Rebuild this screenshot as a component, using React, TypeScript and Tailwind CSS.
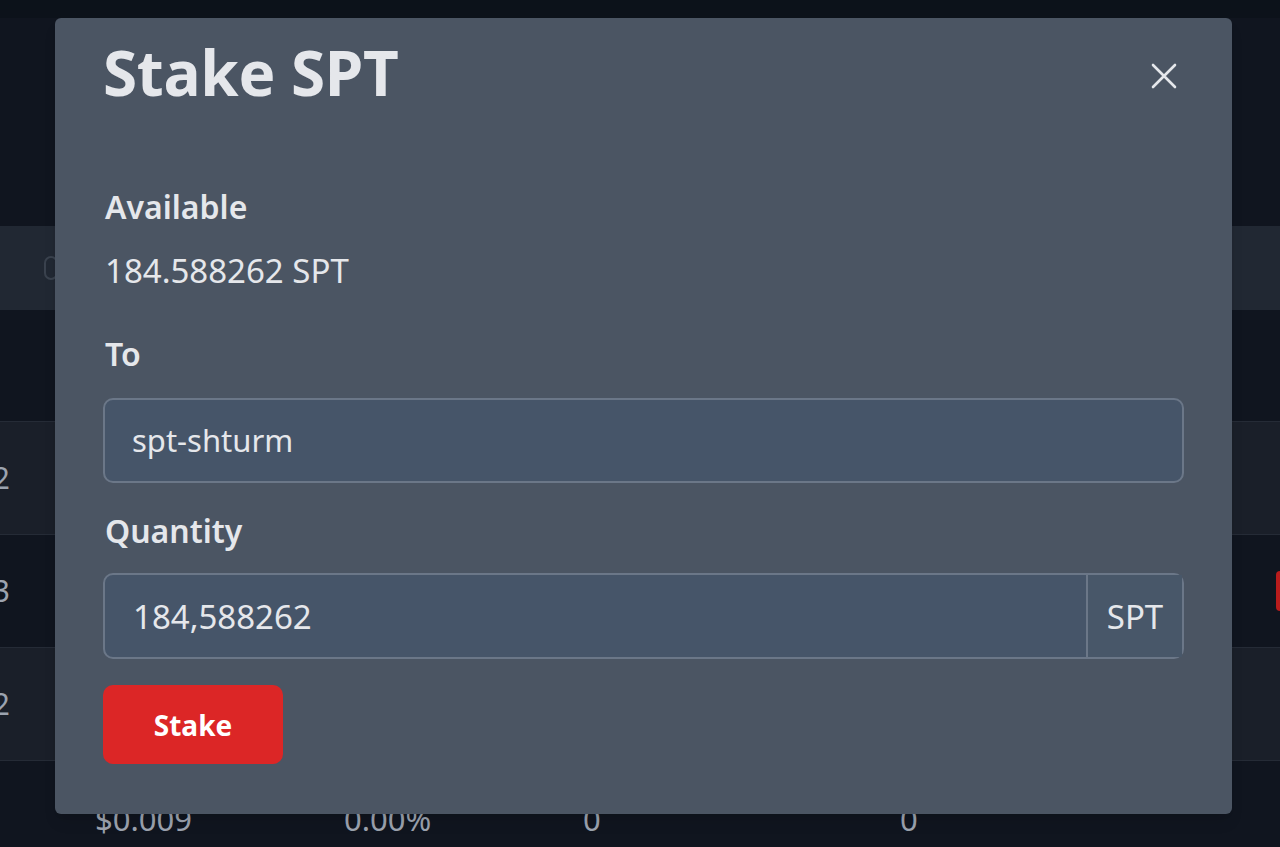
import React from "react";

const font = { fontFamily: '"Noto Sans", "Open Sans", sans-serif' };

function Row({ tone, digit, red }: { tone: string; digit: string; red?: boolean }) {
  return (
    <div className={`relative flex h-[113px] items-center border-b border-[#252b36] ${tone}`}>
      <div className="flex w-[10px] justify-end overflow-hidden">
        <span className="text-[30px] leading-none text-[#9ca3af] underline underline-offset-4">1{digit}</span>
      </div>
      {red && <div className="ml-auto h-[40px] w-[4px] rounded-l-sm bg-[#b91c1c]" />}
    </div>
  );
}

export default function App() {
  return (
    <div className="relative h-[847px] w-[1280px] overflow-hidden bg-[#10151f]" style={font}>
      {/* background page */}
      <div className="h-[18px] bg-[#0c121a]" />
      <div className="h-[208px] bg-[#10151f]" />
      <div className="flex h-[84px] items-center bg-[#212833] pl-[44px]">
        <div className="h-[24px] w-[14px] rounded-full border-2 border-[#3a424e]" />
      </div>
      <div className="h-[112px] border-b border-[#252b36] bg-[#10151f]" />
      <Row tone="bg-[#1a1f29]" digit="2" />
      <Row tone="bg-[#10151f]" digit="3" red />
      <Row tone="bg-[#1a1f29]" digit="2" />
      <div className="grid h-[84px] grid-cols-[95px_249px_239px_317px_1fr] items-start pt-[43px] text-[31px] leading-none text-[#9ca3af]">
        <span />
        <span>$0.009</span>
        <span>0.00%</span>
        <span>0</span>
        <span>0</span>
      </div>

      {/* modal overlay */}
      <div className="absolute left-[55px] top-[18px] flex h-[796px] w-[1177px] flex-col rounded-[6px] bg-[#4b5563] px-[48px] text-[#e5e7eb] shadow-lg">
        <div className="flex items-start justify-between pt-[23px]">
          <h1 className="text-[62px] font-bold leading-none tracking-[-0.3px] text-[#e5e7eb]">Stake SPT</h1>
          <svg className="mr-[7px] mt-[22px]" width="26" height="26" viewBox="0 0 26 26" fill="none">
            <path d="M2 2L24 24M24 2L2 24" stroke="#e5e7eb" strokeWidth="2.6" strokeLinecap="round" />
          </svg>
        </div>

        <div className="mt-[88px] pl-[2px] text-[32px] font-semibold leading-none">Available</div>
        <div className="mt-[31px] pl-[2px] text-[33px] leading-none">184.588262 SPT</div>

        <div className="mt-[51px] pl-[2px] text-[32px] font-semibold leading-none">To</div>
        <div className="mt-[28px] flex h-[85px] items-center rounded-[10px] border-2 border-[#6b7788] bg-[#465569] pl-[27px] text-[31px] leading-none">
          spt-shturm
        </div>

        <div className="mt-[32px] pl-[2px] text-[32px] font-semibold leading-none">Quantity</div>
        <div className="mt-[26px] flex h-[86px] rounded-[10px] border-2 border-[#6b7788] bg-[#465569] text-[33px] leading-none">
          <div className="flex flex-1 items-center pl-[28px]">184,588262</div>
          <div className="flex w-[96px] items-center justify-center border-l-2 border-[#6b7788] bg-[#485769]">SPT</div>
        </div>

        <button className="mt-[26px] flex h-[79px] w-[180px] items-center justify-center rounded-[10px] bg-[#dc2626] text-[28px] font-bold text-white">
          Stake
        </button>
      </div>
    </div>
  );
}
